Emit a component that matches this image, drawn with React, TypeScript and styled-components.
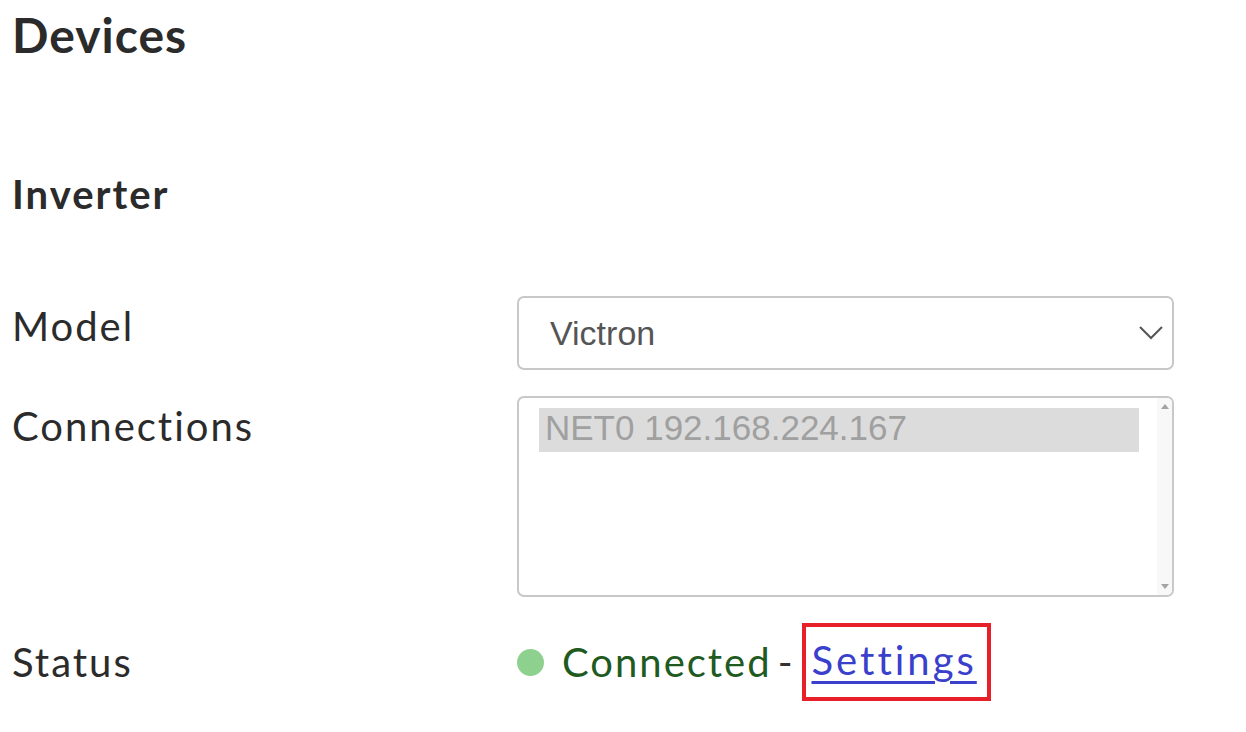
import React from 'react'
import styled, { createGlobalStyle } from 'styled-components'

const GlobalStyle = createGlobalStyle`
  html, body {
    margin: 0;
    padding: 0;
    background: #ffffff;
  }
  body {
    font-family: Lato, "Noto Sans", sans-serif;
    color: #2b2b2b;
  }
`

const Page = styled.div`
  padding: 0 12px;
  width: 1174px;
`

const Title = styled.h1`
  margin: 0;
  padding-top: 6px;
  font-size: 48px;
  line-height: 58px;
  font-weight: 700;
  letter-spacing: 1px;
`

const SectionTitle = styled.h2`
  margin: 0;
  padding-top: 104px;
  font-size: 40px;
  line-height: 52px;
  font-weight: 700;
  letter-spacing: 2px;
`

const Form = styled.div`
  margin-top: 76px;
  display: grid;
  grid-template-columns: 505px 657px;
  row-gap: 26px;
`

const Label = styled.div<{ $top?: number }>`
  font-size: 40px;
  line-height: 46px;
  padding-top: ${p => p.$top ?? 10}px;
  letter-spacing: 2px;
`

const SelectBox = styled.div`
  box-sizing: border-box;
  height: 74px;
  border: 2px solid #c8c8c8;
  border-radius: 7px;
  display: flex;
  align-items: center;
  justify-content: space-between;
  padding: 0 8px 0 31px;
  font-family: "Liberation Sans", Arial, sans-serif;
  font-size: 34px;
  color: #555555;
`

const ListBox = styled.div`
  box-sizing: border-box;
  height: 201px;
  border: 2px solid #c8c8c8;
  border-radius: 7px;
  display: flex;
  overflow: hidden;
`

const ListItems = styled.div`
  flex: 1;
  padding: 10px 18px 0 20px;
`

const Option = styled.div<{ $selected?: boolean }>`
  height: 44px;
  line-height: 40px;
  padding-left: 6px;
  font-family: "Liberation Sans", Arial, sans-serif;
  font-size: 35px;
  color: #a0a0a0;
  background: ${p => (p.$selected ? '#dcdcdc' : 'transparent')};
`

const ScrollTrack = styled.div`
  width: 15px;
  background: #f8f8f8;
  display: flex;
  flex-direction: column;
  justify-content: space-between;
  align-items: center;
  padding: 6px 0;
`

const Arrow = styled.div<{ $down?: boolean }>`
  width: 0;
  height: 0;
  border-left: 4px solid transparent;
  border-right: 4px solid transparent;
  ${p =>
    p.$down
      ? 'border-top: 5px solid #a3a3a3;'
      : 'border-bottom: 5px solid #a3a3a3;'}
`

const StatusRow = styled.div`
  display: flex;
  align-items: center;
  height: 78px;
  font-size: 40px;
  letter-spacing: 2px;
`

const Dot = styled.span`
  width: 27px;
  height: 27px;
  border-radius: 50%;
  background: #8ed18e;
  margin-right: 18px;
  flex-shrink: 0;
`

const Connected = styled.span`
  color: #1f5a1f;
`

const Dash = styled.span`
  color: #333333;
  margin: 0 7px 0 6px;
`

const Highlight = styled.span`
  box-sizing: border-box;
  border: 4px solid #e8202a;
  padding: 0 10px 4px 6px;
  height: 78px;
  display: flex;
  align-items: center;
`

const SettingsLink = styled.a`
  color: #3a3fcc;
  letter-spacing: 3px;
  text-decoration: underline;
  text-decoration-thickness: 3px;
  text-underline-offset: 6px;
`

export default function App() {
  return (
    <>
      <GlobalStyle />
      <Page>
        <Title>Devices</Title>
        <SectionTitle>Inverter</SectionTitle>
        <Form>
          <Label $top={7}>Model</Label>
          <SelectBox>
            <span>Victron</span>
            <svg width="26" height="16" viewBox="0 0 26 16">
              <path d="M2 2 L13 13 L24 2" fill="none" stroke="#555" strokeWidth="2" />
            </svg>
          </SelectBox>

          <Label $top={7}>Connections</Label>
          <ListBox>
            <ListItems>
              <Option $selected>NET0 192.168.224.167</Option>
            </ListItems>
            <ScrollTrack>
              <Arrow />
              <Arrow $down />
            </ScrollTrack>
          </ListBox>

          <Label $top={16}>Status</Label>
          <StatusRow>
            <Dot />
            <Connected>Connected</Connected>
            <Dash>-</Dash>
            <Highlight>
              <SettingsLink href="#">Settings</SettingsLink>
            </Highlight>
          </StatusRow>
        </Form>
      </Page>
    </>
  )
}
